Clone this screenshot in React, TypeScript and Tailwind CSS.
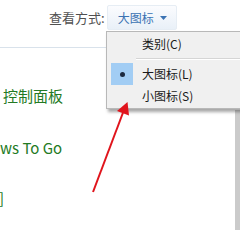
import React from 'react'

const CJK = { fontFamily: '"Noto Sans CJK SC", "Noto Sans", sans-serif' }

function MenuItem({ label, checked }: { label: string; checked?: boolean }) {
  return (
    <div className="flex items-center h-[22px]">
      <div className="w-[26px] h-[22px] ml-[2px] flex items-center justify-center">
        {checked && (
          <div className="w-[22px] h-[22px] bg-[#a2cdf4] flex items-center justify-center">
            <div className="w-[5px] h-[5px] rounded-full bg-[#1c2a40]" />
          </div>
        )}
      </div>
      <span className="ml-[7px] text-[12px] leading-none text-[#1a1a1a]">{label}</span>
    </div>
  )
}

export default function App() {
  return (
    <div className="relative w-[240px] h-[230px] overflow-hidden bg-white" style={CJK}>
      <div className="h-[48px] border-b border-[#d9e2eb] flex items-start pl-[49px] pt-[5px]">
        <span className="text-[13px] leading-[24px] text-[#505050] mt-[1px]">查看方式:</span>
        <div className="ml-[2px] w-[70px] h-[25px] flex items-center pl-[10px] gap-[6px] rounded-[2px] border border-[#e6edf4] bg-gradient-to-b from-[#fbfcfe] to-[#e9f0f8]">
          <span className="text-[12px] leading-none text-[#3b73b3]">大图标</span>
          <svg width="7" height="4" viewBox="0 0 7 4">
            <path d="M0 0h7L3.5 4z" fill="#3b73b3" />
          </svg>
        </div>
      </div>

      <div className="flex flex-col pt-[38px] gap-[31px] text-[15px] leading-[20px] text-[#237a23]">
        <span className="pl-[3px]">控制面板</span>
        <span className="mt-[1px]">ws To Go</span>
        <span className="-ml-[1px] -mt-[1px]">]</span>
      </div>

      <div className="absolute right-0 top-[110px] bottom-0 w-[5px] bg-[#cbcbcb]" />

      <div className="absolute left-[106px] top-[31px] w-[140px] border border-[#b8b8b8] bg-[#f0f0f0] pt-[1px] pb-[1px] shadow-[2px_3px_3px_rgba(0,0,0,0.35)]">
        <MenuItem label="类别(C)" />
        <div className="h-[8px] flex items-center pl-[29px]">
          <div className="w-full h-[2px] border-t border-[#d5d5d5] border-b border-b-white" />
        </div>
        <MenuItem label="大图标(L)" checked />
        <MenuItem label="小图标(S)" />
      </div>

      <svg className="absolute left-0 top-0" width="240" height="230" viewBox="0 0 240 230">
        <line x1="93" y1="192" x2="124" y2="110" stroke="#e0141c" strokeWidth="2" />
        <path d="M127.5 102 L129 115.5 L117 111 Z" fill="#e0141c" />
      </svg>
    </div>
  )
}
